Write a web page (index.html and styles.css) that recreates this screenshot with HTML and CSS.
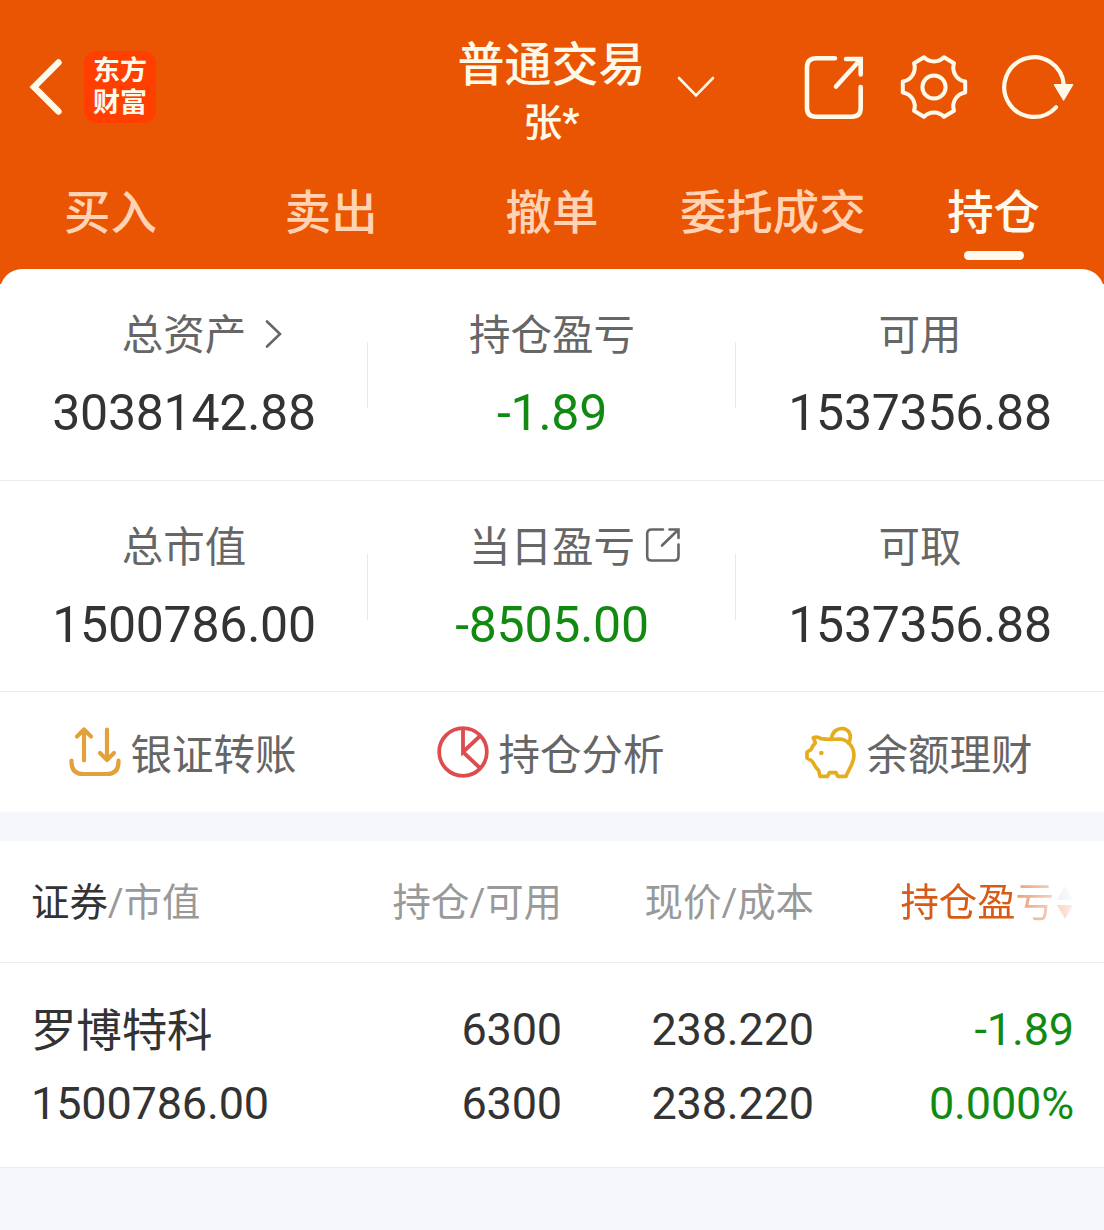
FILE: index.html
```html
<!DOCTYPE html>
<html lang="zh-CN">
<head>
    <meta charset="UTF-8">
    <meta name="viewport" content="width=device-width, initial-scale=1.0">
    <title>普通交易 - 持仓</title>
    <link rel="stylesheet" href="styles.css">
</head>
<body>
    <header class="header">
        <div class="top-bar">
            <div class="top-left">
                <svg class="back-icon" width="36" height="60" viewBox="0 0 36 60" fill="none" stroke="currentColor" stroke-width="6.4" stroke-linecap="round">
                    <path d="M30.5 5.5L6 30L30.5 54.5"/>
                </svg>
                <div class="logo">东方<br>财富</div>
            </div>
            <div class="title">
                <h1>普通交易</h1>
                <div class="account">张*</div>
            </div>
            <div class="top-right">
                <svg class="down-icon" width="38" height="22" viewBox="0 0 38 22" fill="none" stroke="currentColor" stroke-width="2.6" stroke-linecap="round">
                    <path d="M2 2L19 19.5L36 2"/>
                </svg>
                <svg class="share-icon" width="62" height="66" viewBox="0 0 62 66" fill="none" stroke="currentColor" stroke-width="4.6" stroke-linecap="round">
                    <path d="M31 4.3H12Q3 4.3 3 13.3V53.7Q3 62.7 12 62.7H47.7Q56.7 62.7 56.7 53.7V33"/>
                    <path d="M32 32.5L56 6M42 5H56.7V20.5"/>
                </svg>
                <svg class="gear-icon" width="68" height="66" viewBox="-34 -33 68 66" fill="none" stroke="currentColor" stroke-width="4" stroke-linejoin="round">
                    <path d="M-10 -29.8A13.8 13.8 0 0 0 10 -29.8L20 -23.8A14 14 0 0 0 31.2 -5.5V5.5A14 14 0 0 0 20 23.8L10 29.8A13.8 13.8 0 0 0 -10 29.8L-20 23.8A14 14 0 0 0 -31.2 5.5V-5.5A14 14 0 0 0 -20 -23.8Z"/>
                    <circle r="11.6"/>
                </svg>
                <svg class="refresh-icon" width="74" height="66" viewBox="-33 -33 74 66">
                    <path d="M22 20.3A29.8 29.8 0 1 1 29.8 -2" fill="none" stroke="currentColor" stroke-width="4.2" stroke-linecap="round"/>
                    <path d="M20.5 -2.2H38.5L29.6 13Z" fill="currentColor" stroke="currentColor" stroke-width="1.4" stroke-linejoin="round"/>
                </svg>
            </div>
        </div>
        <nav class="tabs">
            <a class="tab">买入</a>
            <a class="tab">卖出</a>
            <a class="tab">撤单</a>
            <a class="tab">委托成交</a>
            <a class="tab active">持仓</a>
        </nav>
    </header>

    <main class="sheet">
        <section class="summary">
            <div class="summary-item">
                <div class="label">总资产
                    <svg class="more-icon" width="18" height="30" viewBox="0 0 18 30" fill="none" stroke="currentColor" stroke-width="2.6" stroke-linecap="round">
                        <path d="M2 2.5L15 15L2 27.5"/>
                    </svg>
                </div>
                <div class="value">3038142.88</div>
            </div>
            <div class="summary-item">
                <div class="label">持仓盈亏</div>
                <div class="value down">-1.89</div>
            </div>
            <div class="summary-item">
                <div class="label">可用</div>
                <div class="value">1537356.88</div>
            </div>
        </section>
        <section class="summary">
            <div class="summary-item">
                <div class="label">总市值</div>
                <div class="value">1500786.00</div>
            </div>
            <div class="summary-item">
                <div class="label">当日盈亏
                    <svg class="detail-icon" width="36" height="36" viewBox="0 0 36 36" fill="none" stroke="currentColor" stroke-width="2.6" stroke-linecap="round">
                        <path d="M18 2.5H6.5Q2.2 2.5 2.2 6.8V29.2Q2.2 33.5 6.5 33.5H29.2Q33.5 33.5 33.5 29.2V17.5"/>
                        <path d="M17 18.5L33 3M24.5 2.5H33.5V11"/>
                    </svg>
                </div>
                <div class="value down">-8505.00</div>
            </div>
            <div class="summary-item">
                <div class="label">可取</div>
                <div class="value">1537356.88</div>
            </div>
        </section>
        <section class="actions">
            <a class="action">
                <svg class="transfer-icon" width="52" height="54" viewBox="0 0 52 54" fill="none" stroke="currentColor" stroke-width="4.2" stroke-linecap="round" stroke-linejoin="round">
                    <path d="M2.5 35.5V37Q2.5 49 14 49H38Q49.5 49 49.5 37V35.5"/>
                    <path d="M15 35.5V4.5M8 11.5L15 4.5L22 11.5"/>
                    <path d="M38 4.5V35M31 28L38 35L45 28"/>
                </svg>
                <span>银证转账</span>
            </a>
            <a class="action">
                <svg class="pie-icon" width="52" height="54" viewBox="0 0 52 54" fill="none" stroke="currentColor" stroke-width="3.8">
                    <circle cx="26" cy="27" r="23.8"/>
                    <path d="M26 3V27L43 11M26 27L43.5 43.5"/>
                </svg>
                <span>持仓分析</span>
            </a>
            <a class="action">
                <svg class="pig-icon" width="52" height="54" viewBox="76 42 156 162" fill="none" stroke="currentColor" stroke-width="11" stroke-linecap="round" stroke-linejoin="round">
                    <path d="M101 80Q113 76 124 83Q150 87 176 84C204 84 222 106 223 132C223 158 208 172 199 196H174L169 185H149L144 196H121L117 178C106 171 103 154 94 148L82 141V123L94 116C98 106 101 101 107 96Z"/>
                    <path d="M156 80C162 43 212 44 212 78Q212 88 206 96"/>
                    <circle cx="125" cy="126" r="7" fill="currentColor" stroke="none"/>
                </svg>
                <span>余额理财</span>
            </a>
        </section>
    </main>

    <section class="positions">
        <div class="row table-head">
            <div><span class="dark">证券</span>/市值</div>
            <div>持仓/可用</div>
            <div>现价/成本</div>
            <div class="sorted">
                <span>持仓盈亏</span>
                <svg width="18" height="36" viewBox="0 0 18 36">
                    <path d="M1 15L9 1L17 15Z" fill="#c3ced6"/>
                    <path d="M1 20H17L9 34Z" fill="#ea5504"/>
                </svg>
            </div>
        </div>
        <div class="row stock">
            <div><div class="name">罗博特科</div>1500786.00</div>
            <div>6300<br>6300</div>
            <div>238.220<br>238.220</div>
            <div class="down">-1.89<br>0.000%</div>
        </div>
    </section>
</body>
</html>
```
FILE: styles.css
```css
* {
    box-sizing: border-box;
}
body {
    font-family: Roboto, "Noto Sans CJK SC", sans-serif;
    background-color: #fff;
    color: #333;
    margin: 0;
    min-height: 1230px;
    display: flex;
    flex-direction: column;
}
svg {
    display: block;
    flex-shrink: 0;
}

/* header */
.header {
    height: 284px;
    background-color: #ea5504;
    color: #fff9ea;
}
.top-bar {
    height: 174px;
    display: grid;
    grid-template-columns: 1fr auto 1fr;
    padding: 0 29px 0 28px;
}
.top-left,
.top-right {
    display: flex;
    align-items: center;
}
.logo {
    width: 72px;
    height: 72px;
    margin-left: 20px;
    padding-top: 4px;
    border-radius: 12px;
    background-color: #ff3f00;
    font-size: 27px;
    font-weight: 700;
    line-height: 32px;
    text-align: center;
}
.title {
    padding-top: 35px;
    text-align: center;
}
.title h1 {
    margin: 0;
    font-size: 47px;
    font-weight: 500;
    line-height: 60px;
}
.account {
    font-size: 39px;
    line-height: 56px;
    font-weight: 500;
}
.down-icon {
    margin: 0 auto 0 31px;
}
.gear-icon {
    margin: 0 33px 0 34px;
}
.tabs {
    display: grid;
    grid-template-columns: repeat(5, 1fr);
}
.tab {
    display: flex;
    flex-direction: column;
    align-items: center;
    padding-top: 1px;
    font-size: 46.4px;
    font-weight: 500;
    line-height: 76px;
    color: #ffd3b4;
}
.tab.active {
    color: #fffaf0;
}
.tab.active::after {
    content: "";
    width: 60px;
    height: 9px;
    border-radius: 5px;
    background-color: #fffaf0;
}

/* account summary */
.sheet {
    margin-top: -15px;
    background-color: #fff;
    border-radius: 22px 22px 0 0;
}
.summary {
    height: 212px;
    display: grid;
    grid-template-columns: repeat(3, 1fr);
    border-bottom: 1px solid #ebebeb;
}
.summary + .summary {
    height: 211px;
}
.summary-item {
    padding-top: 42px;
    text-align: center;
    background: linear-gradient(#e8e8e8, #e8e8e8) right 73px / 1px 66px no-repeat;
}
.summary-item:last-child {
    background: none;
}
.label {
    display: flex;
    justify-content: center;
    align-items: center;
    font-size: 41.5px;
    line-height: 50px;
    color: #666;
}
.more-icon {
    margin: -5px -37px 0 19px;
}
.detail-icon {
    margin: -7px -46px 0 10px;
}
.value {
    margin-top: 22px;
    font-size: 50px;
    line-height: 60px;
    letter-spacing: -0.25px;
}
.down {
    color: #128a12;
}
.actions {
    height: 120px;
    display: grid;
    grid-template-columns: repeat(3, 1fr);
}
.action {
    display: flex;
    justify-content: center;
    align-items: center;
    gap: 9px;
    padding-right: 2px;
    font-size: 41.5px;
    color: #666;
}
.transfer-icon {
    color: #e2a13c;
}
.pie-icon {
    color: #dd4c4e;
}
.pig-icon {
    color: #e5ac1e;
}

/* positions table */
.positions {
    flex: 1;
    border-top: 29px solid #f5f7fa;
    background-color: #f5f7fa;
}
.row {
    display: grid;
    grid-template-columns: 280fr 251fr 252fr 260fr;
    padding: 0 30px 0 31px;
    background-color: #fff;
    border-bottom: 1px solid #ebebeb;
    text-align: right;
}
.row > :first-child {
    text-align: left;
}
.table-head {
    height: 122px;
    padding-top: 2px;
    font-size: 38.4px;
    line-height: 120px;
    color: #999;
}
.table-head .dark {
    color: #333;
}
.sorted {
    display: flex;
    justify-content: flex-end;
    align-items: center;
    gap: 2px;
    color: #d85a17;
    -webkit-mask-image: linear-gradient(to right, #000 76%, rgba(0, 0, 0, 0.55) 79%, rgba(0, 0, 0, 0.1) 100%);
    mask-image: linear-gradient(to right, #000 76%, rgba(0, 0, 0, 0.55) 79%, rgba(0, 0, 0, 0.1) 100%);
}
.stock {
    height: 205px;
    padding-top: 30px;
    font-size: 45px;
    line-height: 74px;
    letter-spacing: -0.15px;
}
.name {
    height: 74px;
    padding-top: 2px;
    font-size: 45.5px;
}
```
